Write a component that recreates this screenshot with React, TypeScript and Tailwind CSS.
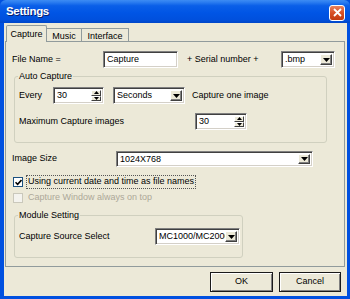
import React from "react";

const font = { fontFamily: '"Liberation Sans", Arial, sans-serif' };

function Arrow() {
  return (
    <svg width="7" height="4" viewBox="0 0 7 4">
      <path d="M0 0H7L3.5 4Z" fill="#000" />
    </svg>
  );
}

function SmallArrow({ up }: { up?: boolean }) {
  return (
    <svg width="5" height="3" viewBox="0 0 5 3">
      <path d={up ? "M0 3H5L2.5 0Z" : "M0 0H5L2.5 3Z"} fill="#000" />
    </svg>
  );
}

function Sunken({ w, h, children }: { w: number; h: number; children: React.ReactNode }) {
  return (
    <div
      className="flex items-stretch border border-[#808080] border-b-white border-r-white bg-white shadow-[inset_1px_1px_0_#404040,inset_-1px_-1px_0_#d4d0c8] p-[2px] shrink-0"
      style={{ width: w, height: h }}
    >
      {children}
    </div>
  );
}

function Select({ w, h = 17, value }: { w: number; h?: number; value: string }) {
  return (
    <Sunken w={w} h={h}>
      <div className="flex-1 overflow-hidden whitespace-nowrap text-[9px] leading-[11px] pl-[1px] text-black">{value}</div>
      <div className="w-[12px] flex items-center justify-center bg-[#ece9d8] border border-white border-b-[#404040] border-r-[#404040] shadow-[inset_-1px_-1px_0_#808080]">
        <Arrow />
      </div>
    </Sunken>
  );
}

function Input({ w, h = 17, value }: { w: number; h?: number; value: string }) {
  return (
    <Sunken w={w} h={h}>
      <div className="flex-1 overflow-hidden whitespace-nowrap text-[9px] leading-[11px] pl-[1px] text-black">{value}</div>
    </Sunken>
  );
}

function Spin({ w, value }: { w: number; value: string }) {
  return (
    <Sunken w={w} h={17}>
      <div className="flex-1 overflow-hidden whitespace-nowrap text-[9px] leading-[11px] pl-[1px] text-black">{value}</div>
      <div className="w-[10px] flex flex-col">
        <div className="flex-1 flex items-center justify-center bg-[#ece9d8] border border-white border-b-[#404040] border-r-[#404040]">
          <SmallArrow up />
        </div>
        <div className="flex-1 flex items-center justify-center bg-[#ece9d8] border border-white border-b-[#404040] border-r-[#404040]">
          <SmallArrow />
        </div>
      </div>
    </Sunken>
  );
}

function Group({ w, h, title, children }: { w: number; h: number; title: string; children: React.ReactNode }) {
  return (
    <div
      className="border border-[#d0d0bf] rounded-[3px] shrink-0 flex flex-col"
      style={{ width: w, height: h }}
    >
      <div className="-mt-[6px] ml-[3px] self-start bg-[#ece9d8] px-[1px] text-[9px] leading-[11px] text-black">{title}</div>
      {children}
    </div>
  );
}

function Check({ checked, disabled }: { checked?: boolean; disabled?: boolean }) {
  return (
    <div
      className={`w-[10px] h-[10px] border shrink-0 flex items-center justify-center ${
        disabled ? "border-[#cac8bb] bg-[#f4f3ee]" : "border-[#1c5180] bg-white"
      }`}
    >
      {checked && (
        <svg width="7" height="7" viewBox="0 0 7 7">
          <path d="M0.5 3.2L2.6 5.3L6.5 1" stroke="#000" strokeWidth="1.6" fill="none" />
        </svg>
      )}
    </div>
  );
}

function Button({ w, label }: { w: number; label: string }) {
  return (
    <div
      className="h-[20px] border border-[#1a1a1a] bg-[#ece9d8] shadow-[inset_1px_1px_0_#ffffff,inset_-1px_-1px_0_#808080] flex items-center justify-center text-[9px] text-black shrink-0"
      style={{ width: w }}
    >
      {label}
    </div>
  );
}

export default function App() {
  return (
    <div className="w-[350px] h-[299px] flex flex-col bg-[#0050e0] overflow-hidden" style={font}>
      {/* Title bar */}
      <div className="h-[23px] shrink-0 flex items-center justify-between pl-[6px] pr-[5px] bg-[linear-gradient(to_bottom,#3d8cf3_0%,#2a7cf0_10%,#0a5fe8_25%,#0055e5_55%,#0050dd_85%,#0046c8_100%)] rounded-t-[6px]">
        <span className="text-white font-bold text-[11.5px] tracking-[-0.3px] [text-shadow:1px_1px_0_#0a1f6e]">Settings</span>
        <div className="w-[16px] h-[16px] mt-[2px] rounded-[3px] border border-white bg-[linear-gradient(to_bottom,#e9835e,#d74e25_50%,#c23a10)] flex items-center justify-center">
          <svg width="9" height="9" viewBox="0 0 9 9">
            <path d="M1 1L8 8M8 1L1 8" stroke="#fff" strokeWidth="1.8" />
          </svg>
        </div>
      </div>

      {/* Body */}
      <div className="flex-1 ml-[4px] mr-[3px] mb-[3px] bg-[#ece9d8] flex flex-col">
        {/* Tabs */}
        <div className="h-[17px] mt-[2px] ml-[2px] flex items-end text-[9px] text-black">
          <div className="relative z-10 h-[17px] w-[41px] bg-[#ece9d8] border border-b-0 border-[#919b9c] rounded-t-[2px] flex items-start justify-center pt-[2px]">
            Capture
          </div>
          <div className="h-[14px] w-[35px] border border-l-0 border-b-0 border-[#919b9c] flex items-start justify-center pt-[1px]">
            Music
          </div>
          <div className="h-[14px] w-[47px] border border-l-0 border-b-0 border-[#919b9c] flex items-start justify-center pt-[1px]">
            Interface
          </div>
        </div>

        {/* Panel */}
        <div className="-mt-[1px] ml-[1px] w-[340px] h-[226px] border border-[#919b9c] bg-[#ece9d8] flex flex-col text-[9px] text-black">
          {/* File name row */}
          <div className="mt-[9px] ml-[6px] h-[17px] flex items-center">
            <div className="w-[91px]">File Name =</div>
            <Input w={75} value="Capture" />
            <div className="ml-[9px] w-[94px]">+ Serial number +</div>
            <Select w={54} value=".bmp" />
          </div>

          {/* Auto capture */}
          <div className="mt-[8px] ml-[8px]">
            <Group w={313} h={67} title="Auto Capture">
              <div className="mt-[5px] ml-[4px] h-[17px] flex items-center">
                <div className="w-[34px]">Every</div>
                <Spin w={51} value="30" />
                <div className="ml-[9px]">
                  <Select w={72} value="Seconds" />
                </div>
                <div className="ml-[7px]">Capture one image</div>
              </div>
              <div className="mt-[9px] ml-[4px] h-[17px] flex items-center">
                <div className="w-[176px]">Maximum Capture images</div>
                <Spin w={52} value="30" />
              </div>
            </Group>
          </div>

          {/* Image size */}
          <div className="mt-[8px] ml-[6px] h-[16px] flex items-center">
            <div className="w-[104px]">Image Size</div>
            <Select w={197} h={16} value="1024X768" />
          </div>

          {/* Checkbox 1 */}
          <div className="mt-[8px] ml-[7px] h-[14px] flex items-center">
            <Check checked />
            <div className="ml-[3px] h-[14px] px-[1px] flex items-center border border-dotted border-[#555]">
              Using current date and time as file names
            </div>
          </div>

          {/* Checkbox 2 */}
          <div className="mt-[2px] ml-[7px] h-[14px] flex items-center text-[#aca899]">
            <Check disabled />
            <div className="ml-[5px]">Capture Window always on top</div>
          </div>

          {/* Module setting */}
          <div className="mt-[10px] ml-[8px]">
            <Group w={229} h={43} title="Module Setting">
              <div className="mt-[7px] ml-[4px] h-[17px] flex items-center">
                <div className="w-[136px]">Capture Source Select</div>
                <Select w={85} value="MC1000/MC2000" />
              </div>
            </Group>
          </div>
        </div>

        {/* Buttons */}
        <div className="mt-[5px] mr-[6px] flex justify-end gap-[6px]">
          <Button w={63} label="OK" />
          <Button w={62} label="Cancel" />
        </div>
      </div>
    </div>
  );
}
